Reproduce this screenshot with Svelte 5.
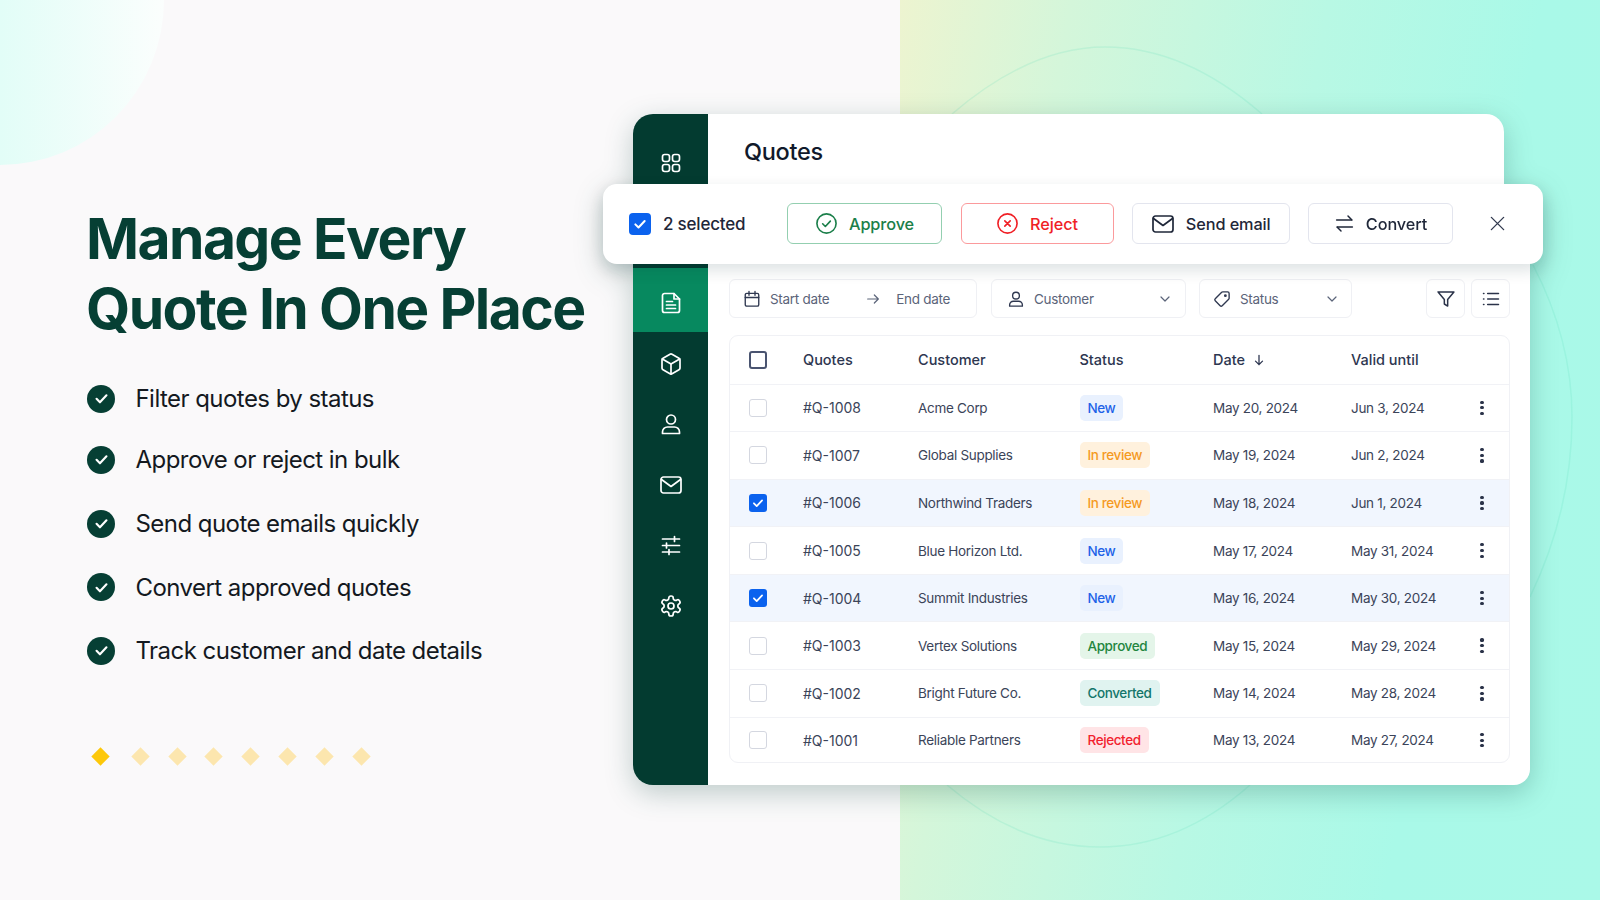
<script lang="ts">
    const checklist = [
        "Filter quotes by status",
        "Approve or reject in bulk",
        "Send quote emails quickly",
        "Convert approved quotes",
        "Track customer and date details",
    ];

    const quotes = [
        { id: "#Q-1008", customer: "Acme Corp", status: "New", date: "May 20, 2024", valid: "Jun 3, 2024", picked: false },
        { id: "#Q-1007", customer: "Global Supplies", status: "In review", date: "May 19, 2024", valid: "Jun 2, 2024", picked: false },
        { id: "#Q-1006", customer: "Northwind Traders", status: "In review", date: "May 18, 2024", valid: "Jun 1, 2024", picked: true },
        { id: "#Q-1005", customer: "Blue Horizon Ltd.", status: "New", date: "May 17, 2024", valid: "May 31, 2024", picked: false },
        { id: "#Q-1004", customer: "Summit Industries", status: "New", date: "May 16, 2024", valid: "May 30, 2024", picked: true },
        { id: "#Q-1003", customer: "Vertex Solutions", status: "Approved", date: "May 15, 2024", valid: "May 29, 2024", picked: false },
        { id: "#Q-1002", customer: "Bright Future Co.", status: "Converted", date: "May 14, 2024", valid: "May 28, 2024", picked: false },
        { id: "#Q-1001", customer: "Reliable Partners", status: "Rejected", date: "May 13, 2024", valid: "May 27, 2024", picked: false },
    ];

    const statusClass = {
        "New": "new",
        "In review": "review",
        "Approved": "approved",
        "Converted": "converted",
        "Rejected": "rejected",
    };

    const icons = {
        grid: '<rect x="3.5" y="3.5" width="7" height="7" rx="2.2"/><rect x="13.5" y="3.5" width="7" height="7" rx="2.2"/><rect x="3.5" y="13.5" width="7" height="7" rx="2.2"/><rect x="13.5" y="13.5" width="7" height="7" rx="2.2"/>',
        file: '<path d="M15 2.5H5.5a2 2 0 0 0-2 2v15a2 2 0 0 0 2 2h13a2 2 0 0 0 2-2V8z"/><path d="M15 2.500V8h5.500"/><path d="M7.500 10.500h6M7.500 14h9M7.500 17.500h9"/>',
        box: '<path d="M21 8a2 2 0 0 0-1-1.730l-7-4a2 2 0 0 0-2 0l-7 4A2 2 0 0 0 3 8v8a2 2 0 0 0 1 1.730l7 4a2 2 0 0 0 2 0l7-4A2 2 0 0 0 21 16z"/><path d="m3.300 7 8.700 5 8.700-5"/><path d="M12 22V12"/>',
        user: '<circle cx="12" cy="7.500" r="4.500"/><path d="M3.500 21.500V20a5 5 0 0 1 5-5h7a5 5 0 0 1 5 5v1.500z"/>',
        mail: '<rect x="2" y="4" width="20" height="16" rx="2.500"/><path d="m2.500 6.500 9.500 7 9.500-7"/>',
        sliders: '<path d="M3.500 6h17M3.500 12.500h17M3.500 19h17"/><path d="M15.500 3.500v5M7.500 10v5M10 16.500v5"/>',
        gear: '<path d="M12.220 2h-.44a2 2 0 0 0-2 2v.18a2 2 0 0 1-1 1.730l-.43.25a2 2 0 0 1-2 0l-.15-.08a2 2 0 0 0-2.730.73l-.22.38a2 2 0 0 0 .73 2.730l.15.1a2 2 0 0 1 1 1.720v.51a2 2 0 0 1-1 1.740l-.15.09a2 2 0 0 0-.73 2.730l.22.38a2 2 0 0 0 2.730.73l.15-.08a2 2 0 0 1 2 0l.43.25a2 2 0 0 1 1 1.730V20a2 2 0 0 0 2 2h.44a2 2 0 0 0 2-2v-.18a2 2 0 0 1 1-1.730l.43-.25a2 2 0 0 1 2 0l.15.08a2 2 0 0 0 2.730-.73l.22-.39a2 2 0 0 0-.73-2.730l-.15-.08a2 2 0 0 1-1-1.740v-.5a2 2 0 0 1 1-1.740l.15-.09a2 2 0 0 0 .73-2.730l-.22-.38a2 2 0 0 0-2.730-.73l-.15.08a2 2 0 0 1-2 0l-.43-.25a2 2 0 0 1-1-1.730V4a2 2 0 0 0-2-2z"/><circle cx="12" cy="12" r="3"/>',
        check: '<path d="m5 12.500 4.800 4.800L19 7.500"/>',
        circleCheck: '<circle cx="12" cy="12" r="10"/><path d="m8 12.300 2.800 2.800L16 9.500"/>',
        circleX: '<circle cx="12" cy="12" r="10"/><path d="m9.200 9.200 5.600 5.600M14.800 9.200l-5.600 5.600"/>',
        swap: '<path d="M3 8h17"/><path d="m16 3.500 4.500 4.500"/><path d="M21 16H4"/><path d="m8 20.500-4.500-4.500"/>',
        x: '<path d="M5 5l14 14M19 5 5 19"/>',
        calendar: '<rect x="3" y="4.500" width="18" height="17" rx="2"/><path d="M3 10h18M8 2v5M16 2v5"/>',
        arrowRight: '<path d="M4 12h16M14 6l6 6-6 6"/>',
        arrowDown: '<path d="M12 4v16M6 14l6 6 6-6"/>',
        chevron: '<path d="m6 9 6 6 6-6"/>',
        tag: '<path d="M13 2.500h6.500a2 2 0 0 1 2 2V11a2 2 0 0 1-.6 1.400l-8.600 8.600a2 2 0 0 1-2.800 0L3 14.400a2 2 0 0 1 0-2.800l8.600-8.500A2 2 0 0 1 13 2.500z"/><circle cx="16.500" cy="7.500" r="1"/>',
        funnel: '<path d="M2.500 3.500h19l-7.500 9v8l-4-2.500v-5.500z"/>',
        list: '<path d="M8 5.500h13M8 12h13M8 18.500h13"/><path d="M3 5.500h.5M3 12h.5M3 18.500h.5"/>',
    };
</script>

{#snippet icon(name, cls = "")}
    <svg class="icon {cls}" viewBox="0 0 24 24" fill="none" stroke="currentColor" stroke-linecap="round" stroke-linejoin="round">{@html icons[name]}</svg>
{/snippet}

<div class="page">
    <div class="corner-circle"></div>
    <div class="mint-panel"></div>
    <svg class="rings" viewBox="0 0 1600 900" fill="none" stroke="#50dcb4" stroke-opacity="0.16" stroke-width="1.5" aria-hidden="true">
        <path d="M952 114 Q1030 47 1105 47 Q1185 47 1262 114" />
        <path d="M1533 265 Q1572 340 1572 417 Q1572 510 1530 597" />
        <path d="M947 785 Q1020 847 1100 847 Q1180 847 1250 785" />
    </svg>

    <section class="intro">
        <h1>Manage Every<br />Quote In One Place</h1>
        <ul class="checklist">
            {#each checklist as item}
                <li>
                    <span class="tick">{@render icon("check")}</span>
                    {item}
                </li>
            {/each}
        </ul>
        <div class="diamonds">
            {#each Array(8) as _, i}
                <span class="diamond" class:lit={i === 0}></span>
            {/each}
        </div>
    </section>

    <section class="window">
        <nav class="sidebar">
            <div class="nav-top">{@render icon("grid")}</div>
            <div class="nav-item active">{@render icon("file")}</div>
            <div class="nav-item">{@render icon("box")}</div>
            <div class="nav-item">{@render icon("user")}</div>
            <div class="nav-item">{@render icon("mail")}</div>
            <div class="nav-item">{@render icon("sliders")}</div>
            <div class="nav-item">{@render icon("gear")}</div>
        </nav>

        <div class="main">
            <header class="title-bar">Quotes</header>

            <div class="content">
                <div class="filters">
                    <div class="field dates">
                        {@render icon("calendar", "field-icon")}
                        <span class="start">Start date</span>
                        {@render icon("arrowRight", "field-arrow")}
                        <span>End date</span>
                    </div>
                    <div class="field customer">
                        {@render icon("user", "field-icon")}
                        <span>Customer</span>
                        {@render icon("chevron", "field-chevron")}
                    </div>
                    <div class="field status">
                        {@render icon("tag", "field-icon")}
                        <span>Status</span>
                        {@render icon("chevron", "field-chevron")}
                    </div>
                    <div class="square first">{@render icon("funnel")}</div>
                    <div class="square">{@render icon("list")}</div>
                </div>

                <div class="table">
                    <div class="row head">
                        <span class="box head-box"></span>
                        <span>Quotes</span>
                        <span>Customer</span>
                        <span>Status</span>
                        <span class="sorted">Date {@render icon("arrowDown")}</span>
                        <span>Valid until</span>
                        <span></span>
                    </div>
                    {#each quotes as q}
                        <div class="row" class:picked={q.picked}>
                            {#if q.picked}
                                <span class="box on">{@render icon("check")}</span>
                            {:else}
                                <span class="box"></span>
                            {/if}
                            <span class="quote-id">{q.id}</span>
                            <span>{q.customer}</span>
                            <span><b class="badge {statusClass[q.status]}">{q.status}</b></span>
                            <span>{q.date}</span>
                            <span>{q.valid}</span>
                            <span class="kebab"><i></i><i></i><i></i></span>
                        </div>
                    {/each}
                </div>
            </div>
        </div>

        <div class="bulk-bar">
            <span class="box on big">{@render icon("check")}</span>
            <span class="count">2 selected</span>
            <button class="approve">{@render icon("circleCheck")}Approve</button>
            <button class="reject">{@render icon("circleX")}Reject</button>
            <button class="send">{@render icon("mail")}Send email</button>
            <button class="convert">{@render icon("swap")}Convert</button>
            <span class="close">{@render icon("x")}</span>
        </div>
    </section>
</div>

<style>
    :global(body) {
        margin: 0;
        font-family: Inter, "Liberation Sans", sans-serif;
    }

    .page {
        position: relative;
        width: 1600px;
        height: 900px;
        overflow: hidden;
        display: flex;
        background: #faf9fa;
    }

    .corner-circle {
        position: absolute;
        left: -164px;
        top: -165px;
        width: 328px;
        height: 330px;
        border-radius: 50%;
        background: linear-gradient(90deg, #c9fbf0 0%, #e2fdf7 50%, #fbfefd 100%);
    }

    .mint-panel {
        position: absolute;
        left: 900px;
        top: 0;
        width: 700px;
        height: 900px;
        background: linear-gradient(100deg, #edf4d0 0%, #d4f6da 20%, #b8f8e4 50%, #a9f9e8 75%, #aaf9e8 100%);
    }

    .rings {
        position: absolute;
        inset: 0;
    }

    .icon {
        display: block;
        flex: none;
    }

    /* left column */
    .intro {
        position: relative;
        box-sizing: border-box;
        width: 633px;
        padding: 204px 0 0 87px;
    }

    h1 {
        margin: 0 0 0 -1px;
        font-size: 57px;
        line-height: 70px;
        font-weight: 650;
        letter-spacing: -1.6px;
        color: #063f34;
        white-space: nowrap;
    }

    .checklist {
        list-style: none;
        margin: 23px 0 0;
        padding: 0;
    }

    .checklist li {
        display: flex;
        align-items: center;
        gap: 20.5px;
        height: 63.7px;
        font-size: 24px;
        letter-spacing: -0.55px;
        color: #14191f;
    }

    .checklist li:first-child {
        margin-bottom: -2.7px;
    }

    .tick {
        width: 28px;
        height: 28px;
        border-radius: 50%;
        background: #063f34;
        color: #fff;
        display: flex;
        align-items: center;
        justify-content: center;
    }

    .tick .icon {
        width: 17px;
        height: 17px;
        stroke-width: 3;
    }

    .diamonds {
        display: flex;
        gap: 23.8px;
        margin: 67px 0 0 7px;
    }

    .diamond {
        width: 13px;
        height: 13px;
        transform: rotate(45deg);
        background: #fce6ae;
    }

    .diamond.lit {
        background: #fdc80a;
        margin-right: 3px;
    }

    /* app window */
    .window {
        position: relative;
        width: 897px;
        height: 671px;
        margin-top: 114px;
        display: flex;
        filter: drop-shadow(0 8px 14px rgba(0, 60, 50, 0.24));
    }

    .sidebar {
        width: 75px;
        flex: none;
        background: #033b30;
        border-radius: 20px 0 0 20px;
        color: #fff;
        display: flex;
        flex-direction: column;
        align-items: stretch;
    }

    .sidebar .icon {
        width: 24px;
        height: 24px;
        stroke-width: 1.7;
    }

    .nav-top {
        height: 34px;
        padding-top: 37px;
        display: flex;
        justify-content: center;
    }

    .nav-item {
        height: 60.5px;
        display: flex;
        align-items: center;
        justify-content: center;
    }

    .nav-item.active {
        height: 64px;
        margin: 83px 0 1.5px;
        padding-top: 6px;
        background: #07895f;
        box-sizing: border-box;
    }

    .main {
        flex: 1;
        display: flex;
        flex-direction: column;
        min-width: 0;
    }

    .title-bar {
        height: 71px;
        box-sizing: border-box;
        margin-right: 26px;
        padding: 23px 0 0 36px;
        background: #fff;
        border-radius: 0 18px 0 0;
        font-size: 23.5px;
        font-weight: 500;
        letter-spacing: -0.3px;
        line-height: 30px;
        color: #10192b;
    }

    .content {
        flex: 1;
        background: #fff;
        border-radius: 0 0 16px 0;
        padding: 94px 20px 0 21px;
        box-sizing: border-box;
    }

    .filters {
        display: flex;
    }

    .field {
        box-sizing: border-box;
        height: 39px;
        border: 1.5px solid #eff0f4;
        border-radius: 6px;
        display: flex;
        align-items: center;
        font-size: 13.5px;
        letter-spacing: -0.3px;
        color: #5b6479;
    }

    .field :global(.field-icon) {
        width: 18px;
        height: 18px;
        stroke-width: 1.8;
        color: #2f3850;
        margin-right: 9px;
    }

    .field :global(.field-arrow) {
        width: 16px;
        height: 16px;
        stroke-width: 1.8;
        margin: 0 15px 0 36px;
    }

    .field :global(.field-chevron) {
        width: 16px;
        height: 16px;
        stroke-width: 1.8;
        margin-left: auto;
    }

    .dates {
        width: 248px;
        padding-left: 13px;
        margin-right: 14px;
    }

    .customer {
        width: 195px;
        padding: 0 12px 0 15px;
        margin-right: 13px;
    }

    .status {
        width: 153px;
        padding: 0 11px 0 13px;
    }

    .square {
        box-sizing: border-box;
        width: 39px;
        height: 39px;
        border: 1.5px solid #eff0f4;
        border-radius: 6px;
        display: flex;
        align-items: center;
        justify-content: center;
        color: #2b3349;
        margin-left: 6px;
    }

    .square.first {
        margin-left: auto;
    }

    .square .icon {
        width: 20px;
        height: 20px;
        stroke-width: 1.8;
    }

    .table {
        margin-top: 17px;
        border: 1.5px solid #f0f1f5;
        border-radius: 9px;
        overflow: hidden;
        box-sizing: border-box;
        height: 428px;
        width: 781px;
    }

    .row {
        display: grid;
        grid-template-columns: 73px 115px 161.5px 133.5px 138px 1fr 29px;
        align-items: center;
        height: 47.6px;
        box-sizing: border-box;
        border-top: 1.5px solid #f1f2f6;
        font-size: 13.5px;
        letter-spacing: -0.3px;
        color: #3b4459;
    }

    .row:last-child {
        height: 46px;
    }

    .quote-id {
        font-size: 14px;
        letter-spacing: 0;
    }

    .row.head {
        height: 47.5px;
        border-top: 0;
        font-weight: 500;
        font-size: 14.5px;
        letter-spacing: 0;
        color: #2d3650;
    }

    .row.picked {
        background: #f1f6fe;
    }

    .sorted {
        display: flex;
        align-items: center;
        gap: 7px;
    }

    .sorted .icon {
        width: 14px;
        height: 14px;
        stroke-width: 2.2;
    }

    .box {
        box-sizing: border-box;
        width: 18px;
        height: 18px;
        margin-left: 19px;
        border: 1.5px solid #d4d7e0;
        border-radius: 3px;
        display: flex;
        align-items: center;
        justify-content: center;
    }

    .head-box {
        border: 2px solid #4a5470;
    }

    .box.on {
        border: 0;
        background: #0b62ee;
        color: #fff;
    }

    .box.on .icon {
        width: 14px;
        height: 14px;
        stroke-width: 3;
    }

    .badge {
        display: inline-block;
        font-weight: 500;
        font-size: 13.5px;
        letter-spacing: -0.4px;
        line-height: 26px;
        height: 26px;
        padding: 0 8px;
        border-radius: 5px;
    }

    .new { background: #e9f1fe; color: #1d62e8; }
    .review { background: #fff1dd; color: #f59a1f; }
    .approved { background: #e4f5e9; color: #23863f; }
    .converted { background: #e0f3f0; color: #13766a; }
    .rejected { background: #ffe4e6; color: #f2222e; }

    .kebab {
        display: flex;
        flex-direction: column;
        gap: 2.5px;
        align-items: center;
        width: 4px;
    }

    .kebab i {
        width: 3.2px;
        height: 3.2px;
        border-radius: 50%;
        background: #2b3349;
    }

    /* floating bulk actions */
    .bulk-bar {
        position: absolute;
        left: -30px;
        top: 70px;
        width: 940px;
        height: 80px;
        box-sizing: border-box;
        background: #fff;
        border-radius: 14px;
        box-shadow: 0 6px 16px rgba(10, 40, 50, 0.14);
        display: flex;
        align-items: center;
        padding: 0 0 1px 26px;
    }

    .box.big {
        width: 22px;
        height: 22px;
        margin: 0 12px 0 0;
        border-radius: 4px;
    }

    .box.big .icon {
        width: 16px;
        height: 16px;
    }

    .count {
        width: 124px;
        font-size: 17px;
        font-weight: 500;
        letter-spacing: -0.2px;
        color: #1f2739;
    }

    button {
        box-sizing: border-box;
        height: 41px;
        margin: 0 18.5px 0 0;
        padding: 0;
        background: #fff;
        border: 1.5px solid #e3e5ee;
        border-radius: 6px;
        display: flex;
        align-items: center;
        justify-content: center;
        gap: 11px;
        font-family: inherit;
        font-size: 16.3px;
        font-weight: 500;
        letter-spacing: -0.1px;
        color: #1f2739;
    }

    button .icon {
        width: 23px;
        height: 23px;
        stroke-width: 1.7;
    }

    .approve { width: 155px; border-color: #93cfb0; color: #1b7f4a; }
    .reject { width: 153px; border-color: #fb9a9c; color: #f01f25; }
    .send { width: 157.5px; }
    .convert { width: 145px; }

    .send .icon { width: 24px; height: 24px; }
    .convert .icon { width: 21px; height: 21px; }

    .close {
        margin-left: 15px;
        color: #333b50;
    }

    .close .icon {
        width: 21px;
        height: 21px;
        stroke-width: 1.6;
    }
</style>
